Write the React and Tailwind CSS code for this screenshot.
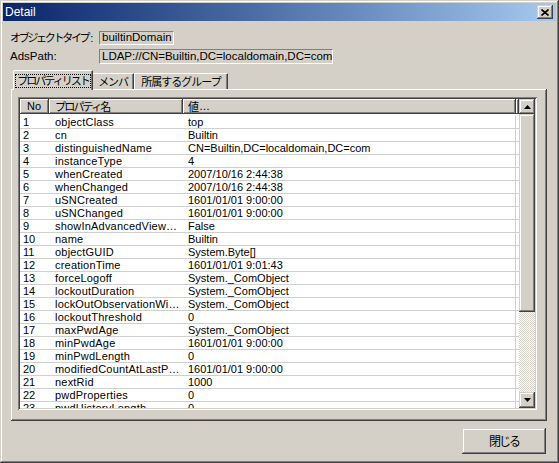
import React from "react";

const rows = [
  ["1", "objectClass", "top"],
  ["2", "cn", "Builtin"],
  ["3", "distinguishedName", "CN=Builtin,DC=localdomain,DC=com"],
  ["4", "instanceType", "4"],
  ["5", "whenCreated", "2007/10/16 2:44:38"],
  ["6", "whenChanged", "2007/10/16 2:44:38"],
  ["7", "uSNCreated", "1601/01/01 9:00:00"],
  ["8", "uSNChanged", "1601/01/01 9:00:00"],
  ["9", "showInAdvancedView…", "False"],
  ["10", "name", "Builtin"],
  ["11", "objectGUID", "System.Byte[]"],
  ["12", "creationTime", "1601/01/01 9:01:43"],
  ["13", "forceLogoff", "System._ComObject"],
  ["14", "lockoutDuration", "System._ComObject"],
  ["15", "lockOutObservationWi…", "System._ComObject"],
  ["16", "lockoutThreshold", "0"],
  ["17", "maxPwdAge", "System._ComObject"],
  ["18", "minPwdAge", "1601/01/01 9:00:00"],
  ["19", "minPwdLength", "0"],
  ["20", "modifiedCountAtLastP…", "1601/01/01 9:00:00"],
  ["21", "nextRid", "1000"],
  ["22", "pwdProperties", "0"],
  ["23", "pwdHistoryLength", "0"],
];

const raised =
  "shadow-[inset_-1px_-1px_0_#404040,inset_1px_1px_0_#ffffff,inset_-2px_-2px_0_#808080]";
const raisedBtn =
  "shadow-[inset_-1px_-1px_0_#404040,inset_1px_1px_0_#d4d0c8,inset_-2px_-2px_0_#808080,inset_2px_2px_0_#ffffff]";

function Jp({ children, className = "" }) {
  return (
    <span className={"font-['Noto_Sans_CJK_JP',sans-serif] " + className}>
      {children}
    </span>
  );
}

function Arrow({ up }) {
  return (
    <svg width="7" height="4" viewBox="0 0 7 4">
      {up ? (
        <polygon points="3.5,0 7,4 0,4" fill="#000" />
      ) : (
        <polygon points="0,0 7,0 3.5,4" fill="#000" />
      )}
    </svg>
  );
}

export default function App() {
  return (
    <div className="w-[559px] h-[463px] bg-[#d4d0c8] p-[3px] flex flex-col font-['Liberation_Sans',sans-serif] text-black shadow-[inset_-1px_-1px_0_#404040,inset_1px_1px_0_#d4d0c8,inset_-2px_-2px_0_#808080,inset_2px_2px_0_#ffffff]">
      {/* title bar */}
      <div className="h-[18px] flex items-center justify-between bg-linear-to-r from-[#0a246a] to-[#a6caf0] pl-[2px] pr-[3px]">
        <span className="text-white text-[12px] leading-none">Detail</span>
        <div
          className={
            "w-[16px] h-[14px] bg-[#d4d0c8] flex items-center justify-center " +
            raisedBtn
          }
        >
          <svg width="8" height="7" viewBox="0 0 8 7">
            <path d="M0.5 0.5 L7.5 6.5 M7.5 0.5 L0.5 6.5" stroke="#000" strokeWidth="1.6" />
          </svg>
        </div>
      </div>

      {/* object type row */}
      <div className="flex items-center mt-[10px] h-[14px]">
        <div className="w-[96px] pl-[7px] text-[11px] leading-none whitespace-nowrap">
          <Jp className="tracking-[-2.3px]">オブジェクトタイプ</Jp>
          <span className="ml-[2px]">:</span>
        </div>
        <div className="w-[75px] h-[14px] border-t border-l border-[#808080] border-r-white border-b-white border-r border-b flex items-center pl-[2px] text-[11.5px] leading-none whitespace-nowrap">
          builtinDomain
        </div>
      </div>

      {/* adspath row */}
      <div className="flex items-center mt-[4px] h-[15px]">
        <div className="w-[96px] pl-[7px] text-[11.5px] leading-none">AdsPath:</div>
        <div className="w-[234px] h-[15px] border-t border-l border-[#808080] border-r-white border-b-white border-r border-b flex items-center pl-[2px] text-[11.5px] leading-none whitespace-nowrap">
          LDAP://CN=Builtin,DC=localdomain,DC=com
        </div>
      </div>

      {/* tabs */}
      <div className="mt-[5px] h-[20px] ml-[10px] flex items-end">
        <div className="relative z-10 w-[80px] h-[20px] mb-[-1px] bg-[#d4d0c8] border-l border-t border-white rounded-tl-[2px] shadow-[inset_-1px_0_0_#808080] border-r border-r-[#404040] flex items-center justify-center">
          <div className="w-[76px] h-[14px] border border-dotted border-black flex items-center justify-center text-[11px] leading-none whitespace-nowrap">
            <Jp className="tracking-[-2px]">プロパティリスト</Jp>
          </div>
        </div>
        <div className="w-[41px] h-[16px] bg-[#d4d0c8] border-t border-white border-r border-r-[#404040] shadow-[inset_-1px_0_0_#808080] flex items-center justify-center text-[11px] leading-none whitespace-nowrap">
          <Jp className="tracking-[-1.2px]">メンバ</Jp>
        </div>
        <div className="w-[94px] h-[16px] bg-[#d4d0c8] border-l border-t border-white border-r border-r-[#404040] shadow-[inset_-1px_0_0_#808080] flex items-center justify-center text-[11px] leading-none whitespace-nowrap">
          <Jp className="tracking-[-1px]">所属するグループ</Jp>
        </div>
      </div>

      {/* tab panel */}
      <div className={"ml-[8px] w-[536px] h-[332px] pt-[8px] pl-[7px] " + raised}>
        <div className="w-[519px] h-[313px] p-[2px] shadow-[inset_1px_1px_0_#808080,inset_-1px_-1px_0_#ffffff,inset_2px_2px_0_#404040,inset_-2px_-2px_0_#d4d0c8]">
          <div className="flex h-full">
            <div className="w-[499px] bg-white flex flex-col overflow-hidden">
              <div className="h-[15px] flex shrink-0 bg-[#d4d0c8] text-[11px] leading-none">
                <div className={"w-[29px] h-full flex items-center pl-[7px] " + raised}>No</div>
                <div className={"w-[134px] h-full flex items-center pl-[6px] " + raised}>
                  <Jp className="tracking-[-1.8px]">プロパティ名</Jp>
                </div>
                <div className={"w-[333px] h-full flex items-center pl-[5px] " + raised}>
                  <Jp>値</Jp>
                  <span>…</span>
                </div>
                <div className={"flex-1 h-full " + raised}></div>
              </div>
              <div className="flex-1 overflow-hidden pt-[2px]">
                {rows.map((r) => (
                  <div
                    key={r[0]}
                    className="h-[13px] flex border-b border-[#cfcfcf] text-[11px] leading-[12px] whitespace-nowrap"
                  >
                    <div className="w-[29px] pl-[3px]">{r[0]}</div>
                    <div className="w-[134px] pl-[6px] tracking-[0.2px]">{r[1]}</div>
                    <div className="w-[333px] pl-[5px] border-r border-[#cfcfcf]">{r[2]}</div>
                  </div>
                ))}
              </div>
            </div>
            {/* scrollbar */}
            <div className="w-[16px] flex flex-col">
              <div className={"h-[15px] bg-[#d4d0c8] flex items-center justify-center " + raisedBtn}>
                <Arrow up />
              </div>
              <div className={"h-[198px] bg-[#d4d0c8] " + raisedBtn}></div>
              <div className="flex-1 bg-[repeating-conic-gradient(#d4d0c8_0_25%,#ffffff_0_50%)] bg-[length:2px_2px]"></div>
              <div className={"h-[16px] bg-[#d4d0c8] flex items-center justify-center " + raisedBtn}>
                <Arrow />
              </div>
            </div>
          </div>
        </div>
      </div>

      {/* close button */}
      <div className="flex justify-end mt-[7px] pr-[10px]">
        <div
          className={
            "w-[84px] h-[26px] bg-[#d4d0c8] flex items-center justify-center text-[12px] leading-none " +
            raisedBtn
          }
        >
          <Jp className="tracking-[-2px]">閉じる</Jp>
        </div>
      </div>
    </div>
  );
}
